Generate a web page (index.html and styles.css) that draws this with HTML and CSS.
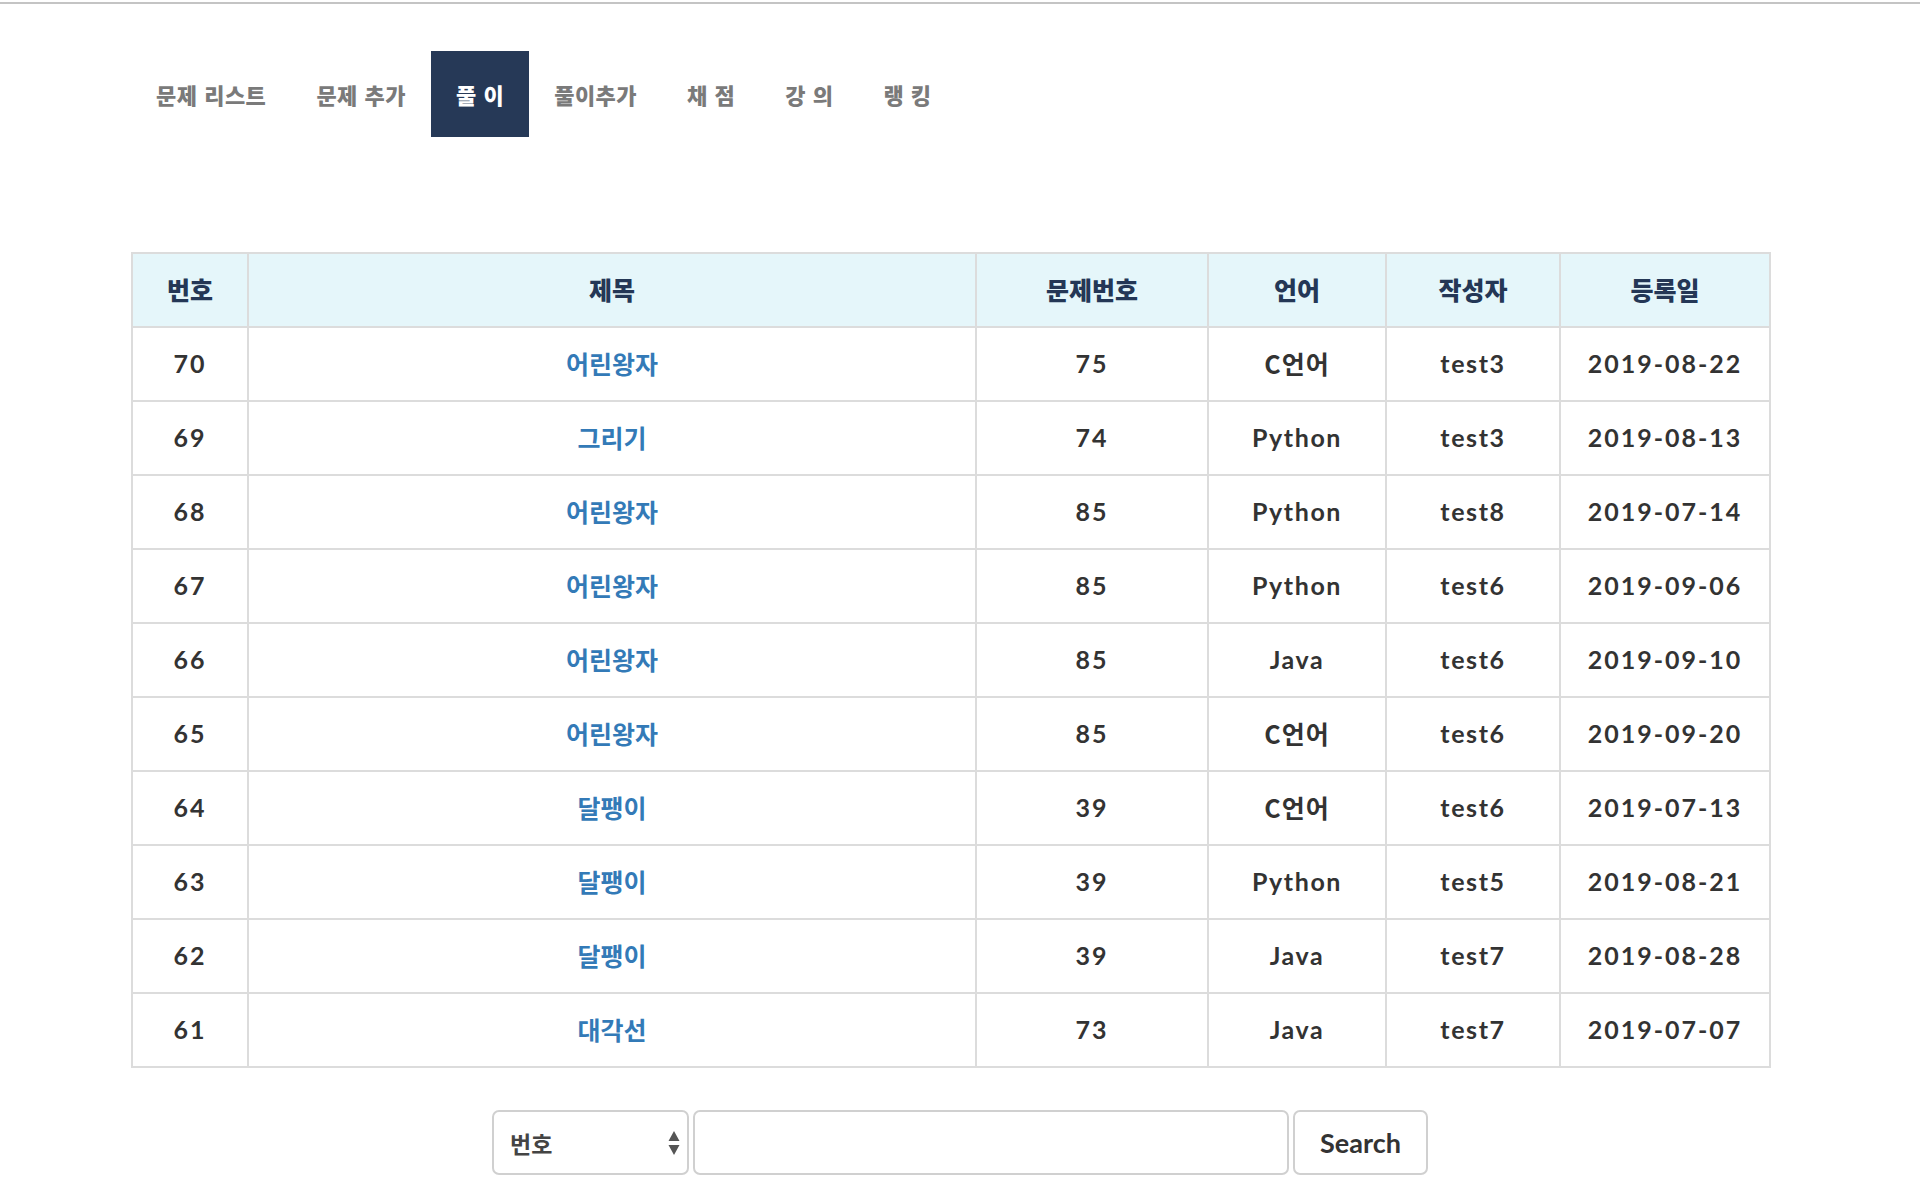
FILE: index.html
```html
<!DOCTYPE html>
<html lang="ko">
<head>
<meta charset="utf-8">
<title>풀이</title>
<link rel="stylesheet" href="styles.css">
</head>
<body>
<div class="topline"></div>
<div class="page">
  <nav class="tabs">
    <a class="tab">문제 리스트</a>
    <a class="tab">문제 추가</a>
    <a class="tab active">풀 이</a>
    <a class="tab">풀이추가</a>
    <a class="tab">채 점</a>
    <a class="tab">강 의</a>
    <a class="tab">랭 킹</a>
  </nav>

  <table class="board">
    <colgroup>
      <col class="c-no"><col class="c-title"><col class="c-pno"><col class="c-lang"><col class="c-writer"><col class="c-date">
    </colgroup>
    <thead>
      <tr><th>번호</th><th>제목</th><th>문제번호</th><th>언어</th><th>작성자</th><th>등록일</th></tr>
    </thead>
    <tbody>
      <tr><td class="num">70</td><td><a class="link">어린왕자</a></td><td class="num">75</td><td class="ko">C언어</td><td class="lat">test3</td><td class="num">2019-08-22</td></tr>
      <tr><td class="num">69</td><td><a class="link">그리기</a></td><td class="num">74</td><td class="lat">Python</td><td class="lat">test3</td><td class="num">2019-08-13</td></tr>
      <tr><td class="num">68</td><td><a class="link">어린왕자</a></td><td class="num">85</td><td class="lat">Python</td><td class="lat">test8</td><td class="num">2019-07-14</td></tr>
      <tr><td class="num">67</td><td><a class="link">어린왕자</a></td><td class="num">85</td><td class="lat">Python</td><td class="lat">test6</td><td class="num">2019-09-06</td></tr>
      <tr><td class="num">66</td><td><a class="link">어린왕자</a></td><td class="num">85</td><td class="lat">Java</td><td class="lat">test6</td><td class="num">2019-09-10</td></tr>
      <tr><td class="num">65</td><td><a class="link">어린왕자</a></td><td class="num">85</td><td class="ko">C언어</td><td class="lat">test6</td><td class="num">2019-09-20</td></tr>
      <tr><td class="num">64</td><td><a class="link">달팽이</a></td><td class="num">39</td><td class="ko">C언어</td><td class="lat">test6</td><td class="num">2019-07-13</td></tr>
      <tr><td class="num">63</td><td><a class="link">달팽이</a></td><td class="num">39</td><td class="lat">Python</td><td class="lat">test5</td><td class="num">2019-08-21</td></tr>
      <tr><td class="num">62</td><td><a class="link">달팽이</a></td><td class="num">39</td><td class="lat">Java</td><td class="lat">test7</td><td class="num">2019-08-28</td></tr>
      <tr><td class="num">61</td><td><a class="link">대각선</a></td><td class="num">73</td><td class="lat">Java</td><td class="lat">test7</td><td class="num">2019-07-07</td></tr>
    </tbody>
  </table>

  <form class="search">
    <div class="select">
      <span>번호</span>
      <svg class="arrows" width="12" height="26" viewBox="0 0 12 26"><path d="M6 1 L11.5 11 L0.5 11 Z M6 25 L11.5 15 L0.5 15 Z" fill="#555"/></svg>
    </div>
    <div class="field"></div>
    <button type="button" class="btn">Search</button>
  </form>
</div>
</body>
</html>
```

FILE: styles.css
```css
* { box-sizing: border-box; }
html, body { margin: 0; padding: 0; background: #fff; }
body {
  font-family: "Noto Sans CJK KR", "Noto Sans", sans-serif;
  color: #333;
}
.topline {
  height: 4px;
  border-bottom: 2px solid #c4c4c4;
}
.page {
  padding: 47px 151px 0 131px;
}
.tabs {
  display: flex;
  height: 86px;
}
.tab {
  display: flex;
  align-items: center;
  padding: 0 25px;
  font-size: 22px;
  font-weight: 900;
  letter-spacing: 0.5px;
  color: #7a7a7a;
  white-space: pre;
}
.tab.active {
  background: #263957;
  color: #fff;
}
.board {
  margin-top: 115px;
  width: 1638px;
  border-collapse: collapse;
  border: 2px solid #dcdcdc;
  table-layout: fixed;
}
.c-no { width: 116px; }
.c-title { width: 728px; }
.c-pno { width: 232px; }
.c-lang { width: 178px; }
.c-writer { width: 174px; }
.c-date { width: 210px; }
.board th, .board td {
  border: 2px solid #dcdcdc;
  height: 74px;
  padding: 0 0 2px;
  text-align: center;
  vertical-align: middle;
  font-size: 25px;
  font-weight: 700;
}
.board th {
  background: #e5f6fa;
  color: #243756;
  font-weight: 900;
}
.board td { color: #333; }
.board td.num { letter-spacing: 2px; font-family: "Lato", "Noto Sans CJK KR", sans-serif; font-size: 25px; }
.board td.lat { font-family: "Lato", "Noto Sans CJK KR", sans-serif; font-size: 25px; letter-spacing: 1.6px; }
.board td.ko { letter-spacing: 1px; }
.link { color: #337ab7; }
.search {
  display: flex;
  justify-content: center;
  gap: 4px;
  margin: 42px 0 0 -131px;
  width: 1920px;
}
.select {
  width: 197px;
  height: 65px;
  border: 2px solid #d0d0d0;
  border-radius: 7px;
  display: flex;
  align-items: center;
  justify-content: space-between;
  padding: 0 7px 0 16px;
  font-size: 23px;
  font-weight: 700;
  color: #444;
}
.arrows { display: block; }
.field {
  width: 596px;
  height: 65px;
  border: 2px solid #d0d0d0;
  border-radius: 7px;
}
.btn {
  width: 135px;
  height: 65px;
  border: 2px solid #d0d0d0;
  border-radius: 7px;
  background: #fff;
  font-family: "Lato", sans-serif;
  font-weight: 700;
  font-size: 27px;
  color: #333;
  padding: 0;
}
```
